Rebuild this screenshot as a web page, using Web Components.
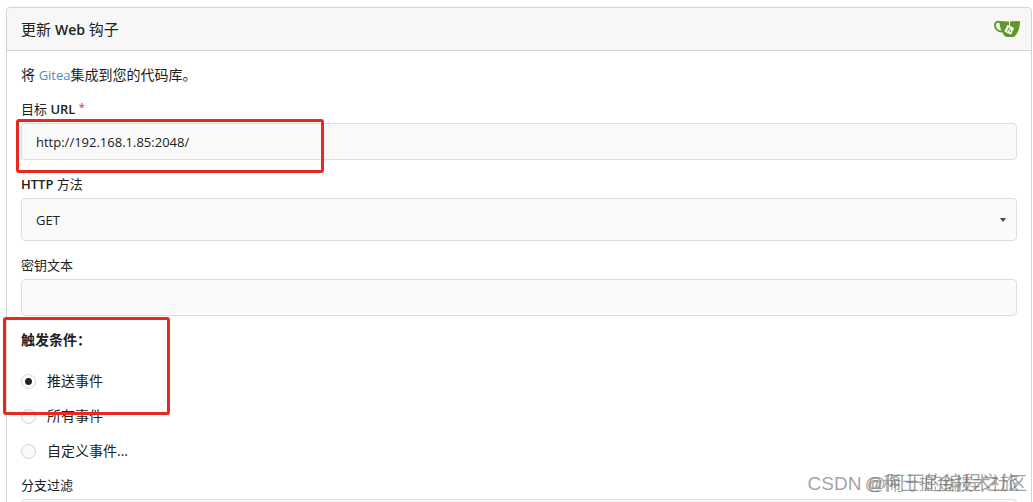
<!DOCTYPE html>
<html lang="zh-CN">

<head>
  <meta charset="UTF-8">
  <meta name="viewport" content="width=device-width, initial-scale=1.0">
  <title>更新 Web 钩子</title>
  <style>
    html {
      height: 100%;
      overflow: hidden;
    }

    body {
      position: relative;
      height: 100%;
      margin: 0;
      overflow: hidden;
      background: #fff;
      color: #212121;
      font: 14px/20px "Open Sans", "Noto Sans CJK SC", sans-serif;
    }

    a {
      color: #4f8cc4;
      font-size: 13px;
      text-decoration: none;
    }

    b {
      font-size: 14px;
      font-weight: 600;
    }

    p {
      margin: 0;
    }
  </style>
</head>

<body>
  <hook-panel>
    <span slot="title">更新 <b>Web</b> 钩子</span>
    <gitea-logo slot="icon"></gitea-logo>
    <p>将 <a href="#gitea">Gitea</a>集成到您的代码库。</p>
    <text-field label="目标 <b>URL</b>" value="http://192.168.1.85:2048/" required></text-field>
    <select-field label="<b>HTTP</b> 方法" options="GET,POST"></select-field>
    <text-field label="密钥文本"></text-field>
    <event-picker label="触发条件：" options="推送事件,所有事件,自定义事件..."></event-picker>
    <text-field label="分支过滤" value="*"></text-field>
  </hook-panel>
  <mark-box style="left: 16px; top: 119px; width: 308px; height: 54px"></mark-box>
  <mark-box style="left: 3px; top: 317px; width: 167px; height: 98px"></mark-box>
  <water-mark>
    <span>@稀土掘金技术社区</span>
    <span slot="front">CSDN @阿于的编程之旅</span>
  </water-mark>
</body>
<script>
  class BaseElement extends HTMLElement {
    constructor() {
      super();
      this.attachShadow({ mode: 'open' });
    }
    connectedCallback() {
      this.shadowRoot.innerHTML = this.render();
    }
  }

  // shared by the text and select fields
  const fieldStyle = `
    :host {
      display: flex;
      flex-direction: column;
      gap: 4px;
    }
    label {
      height: 20px;
      font-size: 13px;
      line-height: 20px;
    }
    b {
      font-weight: 600;
    }
    sup {
      color: #db2828;
      font-size: 11px;
      line-height: 0;
      vertical-align: 3px;
    }
    input, select {
      box-sizing: border-box;
      width: 100%;
      height: 37px;
      margin: 0;
      padding: 0 14px;
      border: 1px solid #dededf;
      border-radius: 4px;
      background: #fafafa;
      color: inherit;
      font: inherit;
      font-size: 13px;
      outline: none;
    }
  `;

  class HookPanel extends BaseElement {
    render() {
      return `
        <style>
          :host {
            display: block;
            margin: 7px 1px 0 6px;
            border: 1px solid #d4d4d5;
            border-radius: 4px;
          }
          header {
            display: flex;
            align-items: center;
            justify-content: space-between;
            height: 42px;
            padding: 0 11px 0 14px;
            border-bottom: 1px solid #d4d4d5;
            border-radius: 4px 4px 0 0;
            background: #f7f7f7;
          }
          h4 {
            margin: 0;
            font-size: 15px;
            font-weight: 400;
          }
          section {
            display: flex;
            flex-direction: column;
            gap: 14px;
            padding: 14px;
          }
        </style>
        <header>
          <h4><slot name="title"></slot></h4>
          <slot name="icon"></slot>
        </header>
        <section><slot></slot></section>
      `;
    }
  }

  class GiteaLogo extends BaseElement {
    render() {
      return `
        <style>
          :host { display: flex; }
        </style>
        <svg width="26" height="18" viewBox="0 0 26 18" aria-hidden="true">
          <path d="M7 2.200C3 1.200 1 2.300 1 5c0 4 3 6.500 7 6.500" fill="none" stroke="#609926" stroke-width="2"/>
          <path d="M5.500 1c6 .5 12 .5 19.500 0 1 0 1 1 1 2-.2 5-2 10-5 13-.6.8-1 1-2 1h-6c-2 0-4-3-5.500-6C6.200 8 5.500 5 5.500 1z" fill="#609926"/>
          <path d="M15.500 1v5" stroke="#fff"/>
          <rect x="11.500" y="6" width="7.500" height="7.500" rx="1" transform="rotate(25 15.250 9.750)" fill="#fff"/>
          <path d="M15.300 7.200l-2 4.300M14.500 9.300c2 .2 2.600 1 1.500 3" fill="none" stroke="#609926"/>
        </svg>
      `;
    }
  }

  class TextField extends BaseElement {
    render() {
      const required = this.hasAttribute('required');
      return `
        <style>${fieldStyle}</style>
        <label for="field">${this.getAttribute('label')}${required ? ' <sup>*</sup>' : ''}</label>
        <input id="field" type="text" value="${this.getAttribute('value') || ''}" ${required ? 'required' : ''}>
      `;
    }
  }

  class SelectField extends BaseElement {
    render() {
      const options = this.getAttribute('options').split(',');
      return `
        <style>
          ${fieldStyle}
          .box {
            display: grid;
            align-items: center;
          }
          select, svg {
            grid-area: 1 / 1;
          }
          select {
            height: 43px;
            appearance: none;
          }
          svg {
            justify-self: end;
            margin-right: 10px;
            pointer-events: none;
          }
        </style>
        <label for="field">${this.getAttribute('label')}</label>
        <div class="box">
          <select id="field">${options.map(o => `<option>${o}</option>`).join('')}</select>
          <svg width="8" height="4" aria-hidden="true"><path d="M1 0h6L4 4z" fill="#444"/></svg>
        </div>
      `;
    }
  }

  class EventPicker extends BaseElement {
    render() {
      const options = this.getAttribute('options').split(',');
      return `
        <style>
          :host { display: block; }
          fieldset {
            display: flex;
            flex-direction: column;
            gap: 15px;
            margin: 0;
            padding: 0;
            border: 0;
          }
          legend {
            margin-bottom: 21px;
            padding: 0;
            font-weight: 700;
          }
          label {
            display: flex;
            align-items: center;
            gap: 11px;
          }
          input {
            width: 15px;
            height: 15px;
            margin: 0;
            border: 1px solid #d4d4d5;
            border-radius: 50%;
            background: #fafafa;
            appearance: none;
          }
          input:checked {
            background: radial-gradient(circle, #212121 3px, #fff 4px);
          }
        </style>
        <fieldset>
          <legend>${this.getAttribute('label')}</legend>
          ${options.map((o, i) => `<label><input type="radio" name="events" ${i ? '' : 'checked'}>${o}</label>`).join('')}
        </fieldset>
      `;
    }
  }

  // red frame drawn over the form
  class MarkBox extends BaseElement {
    render() {
      return `
        <style>
          :host {
            position: absolute;
            box-sizing: border-box;
            border: 3px solid #e8291f;
            border-radius: 3px;
            pointer-events: none;
          }
        </style>
      `;
    }
  }

  class WaterMark extends BaseElement {
    render() {
      return `
        <style>
          :host {
            position: absolute;
            right: 6px;
            bottom: 5px;
            display: grid;
            justify-items: end;
            color: rgba(100, 100, 100, .6);
            font: 18px/26px "Liberation Sans", "Noto Sans CJK SC", sans-serif;
            pointer-events: none;
          }
          div { grid-area: 1 / 1; }
          .front {
            margin-right: 8px;
            font-size: 19px;
          }
        </style>
        <div><slot></slot></div>
        <div class="front"><slot name="front"></slot></div>
      `;
    }
  }

  window.customElements.define('hook-panel', HookPanel)
  window.customElements.define('gitea-logo', GiteaLogo)
  window.customElements.define('text-field', TextField)
  window.customElements.define('select-field', SelectField)
  window.customElements.define('event-picker', EventPicker)
  window.customElements.define('mark-box', MarkBox)
  window.customElements.define('water-mark', WaterMark)
</script>

</html>
